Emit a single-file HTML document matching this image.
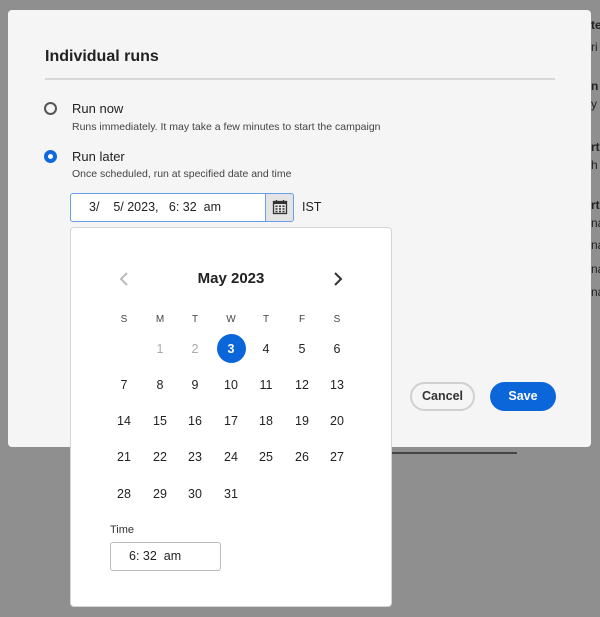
<!DOCTYPE html>
<html><head><style>
*{box-sizing:border-box;margin:0;padding:0}
body{width:600px;height:617px;background:#8f8f8f;font-family:"Liberation Sans",sans-serif;position:relative;overflow:hidden;color:#222}
.abs{position:absolute}
.dlg{left:8px;top:10px;width:583px;height:437px;background:#f5f5f5;border-radius:4px}
.side{left:591px;font-size:12px;color:#222;white-space:nowrap}
.cal{left:70px;top:227px;width:322px;height:380px;background:#fff;border:1px solid #d5d5d5;border-radius:4px}
.d{position:absolute;width:30px;height:30px;line-height:30px;text-align:center;font-size:12.5px;color:#222;margin-left:-15px;margin-top:-15px}
.h{font-size:10px;color:#444}
</style></head><body>
<div class="abs dlg"></div>
<div class="abs side" style="top:18px;font-weight:bold">te</div>
<div class="abs side" style="top:40px">ri</div>
<div class="abs side" style="top:79px;font-weight:bold">n</div>
<div class="abs side" style="top:97px">y</div>
<div class="abs side" style="top:140px;font-weight:bold">rt</div>
<div class="abs side" style="top:158px">h</div>
<div class="abs side" style="top:198px;font-weight:bold">rt</div>
<div class="abs side" style="top:216px">na</div>
<div class="abs side" style="top:238px">na</div>
<div class="abs side" style="top:262px">na</div>
<div class="abs side" style="top:285px">na</div>
<div class="abs" style="left:45px;top:48px;font-size:16px;font-weight:bold;color:#222">Individual runs</div>
<div class="abs" style="left:45px;top:78px;width:510px;height:2px;background:#d8d8d8"></div>
<div class="abs" style="left:44px;top:102px;width:13px;height:13px;border:2px solid #555;border-radius:50%"></div>
<div class="abs" style="left:72px;top:101px;font-size:13px">Run now</div>
<div class="abs" style="left:72px;top:121px;font-size:10.5px;color:#444">Runs immediately. It may take a few minutes to start the campaign</div>
<div class="abs" style="left:44px;top:150px;width:13px;height:13px;border:4px solid #1068e0;border-radius:50%;background:#fff"></div>
<div class="abs" style="left:72px;top:149px;font-size:13px">Run later</div>
<div class="abs" style="left:72px;top:168px;font-size:10.5px;color:#444">Once scheduled, run at specified date and time</div>
<div class="abs" style="left:70px;top:193px;width:196px;height:29px;border:1px solid #6a9ee8;border-radius:3px 0 0 3px;background:#fff;font-size:12.5px;line-height:27px;padding-left:18px;white-space:pre">3/    5/ 2023,   6: 32  am</div>
<div class="abs" style="left:265px;top:193px;width:29px;height:29px;border:1px solid #6a9ee8;border-radius:0 3px 3px 0;background:#e4e4e4"></div>
<svg class="abs" style="left:272px;top:199px" width="16" height="16" viewBox="0 0 16 16"><rect x="1.5" y="2.5" width="13" height="12" fill="none" stroke="#333" stroke-width="1.3"/><rect x="1.5" y="2.5" width="13" height="2.5" fill="#333"/><line x1="4.5" y1="1" x2="4.5" y2="3.5" stroke="#333" stroke-width="1.3"/><line x1="11.5" y1="1" x2="11.5" y2="3.5" stroke="#333" stroke-width="1.3"/><g fill="#333"><rect x="3.5" y="6.5" width="2" height="1.5"/><rect x="7" y="6.5" width="2" height="1.5"/><rect x="10.5" y="6.5" width="2" height="1.5"/><rect x="3.5" y="9.2" width="2" height="1.5"/><rect x="7" y="9.2" width="2" height="1.5"/><rect x="10.5" y="9.2" width="2" height="1.5"/><rect x="3.5" y="11.8" width="2" height="1.5"/><rect x="7" y="11.8" width="2" height="1.5"/><rect x="10.5" y="11.8" width="2" height="1.5"/></g></svg>
<div class="abs" style="left:302px;top:200px;font-size:12.5px">IST</div>
<div class="abs" style="left:410px;top:382px;width:65px;height:29px;border:2px solid #d0d0d0;border-radius:15px;text-align:center;line-height:25px;font-size:12.5px;font-weight:bold;color:#333">Cancel</div>
<div class="abs" style="left:490px;top:382px;width:66px;height:29px;background:#0b66da;border-radius:15px;text-align:center;line-height:29px;font-size:12.5px;font-weight:bold;color:#fff">Save</div>
<div class="abs" style="left:392px;top:452px;width:125px;height:2px;background:#444"></div>
<div class="abs cal"></div>
<svg class="abs" style="left:118px;top:271px" width="12" height="16"><path d="M9 2 L3 8 L9 14" fill="none" stroke="#bbb" stroke-width="2"/></svg>
<svg class="abs" style="left:332px;top:271px" width="12" height="16"><path d="M3 2 L9 8 L3 14" fill="none" stroke="#333" stroke-width="2"/></svg>
<div class="abs" style="left:170px;top:270px;width:122px;text-align:center;font-size:15px;font-weight:bold;color:#222">May 2023</div>
<div class="abs" style="left:217px;top:334px;width:29px;height:29px;border-radius:50%;background:#0b66da"></div>
<div id="g"></div>
<script>
var xs=[124,160,195,231,266,302,337],h='';
"SMTWTFS".split('').forEach(function(c,i){h+='<div class="d h" style="left:'+xs[i]+'px;top:320px">'+c+'</div>'});
var ys=[349,385,421,457,494],n=1;
for(var r=0;r<5;r++)for(var c=0;c<7;c++){if(r==0&&c<1)continue;if(n>31)break;var st='';if(n<3)st='color:#aaa;';if(r==0&&c==3)st='color:#fff;font-weight:bold;';h+='<div class="d" style="left:'+xs[c]+'px;top:'+ys[r]+'px;'+st+'">'+n+'</div>';n++}
document.getElementById('g').innerHTML=h;
</script>
<div class="abs" style="left:110px;top:524px;font-size:11px;color:#333">Time</div>
<div class="abs" style="left:110px;top:542px;width:111px;height:29px;border:1px solid #bbb;border-radius:3px;font-size:12.5px;line-height:27px;padding-left:18px;white-space:pre">6: 32  am</div>
</body></html>
